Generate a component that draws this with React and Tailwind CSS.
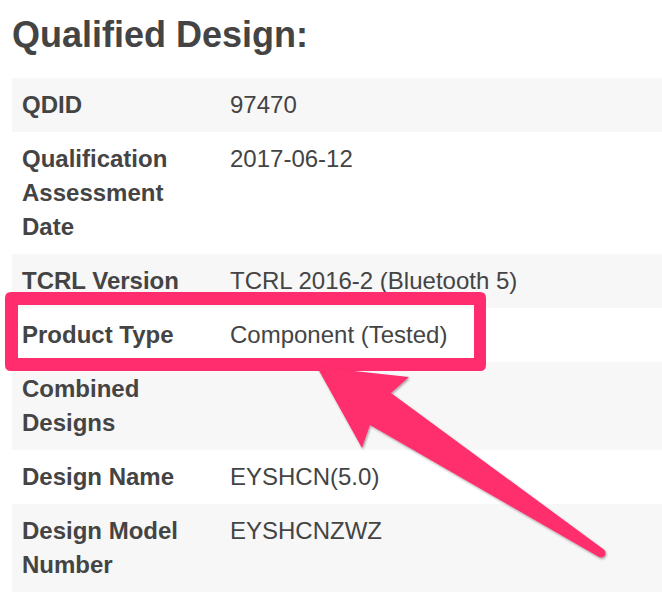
import React from "react";

const rows = [
  { label: "QDID", value: "97470" },
  { label: "Qualification Assessment Date", value: "2017-06-12" },
  { label: "TCRL Version", value: "TCRL 2016-2 (Bluetooth 5)" },
  { label: "Product Type", value: "Component (Tested)" },
  { label: "Combined Designs", value: "" },
  { label: "Design Name", value: "EYSHCN(5.0)" },
  { label: "Design Model Number", value: "EYSHCNZWZ" },
];

// the pink annotation drawn over the table
const Callout = () => (
  <svg
    className="absolute left-0 top-0 pointer-events-none"
    width="662"
    height="592"
    viewBox="0 0 662 592"
  >
    <defs>
      <filter id="shadow" x="-10%" y="-10%" width="120%" height="120%">
        <feDropShadow dx="1" dy="1.5" stdDeviation="1" floodColor="#000" floodOpacity="0.35" />
      </filter>
    </defs>
    <path
      fillRule="evenodd"
      fill="#ff2d6d"
      d="M11 292 H480 Q486 292 486 298 V365 Q486 371 480 371 H11 Q5 371 5 365 V298 Q5 292 11 292 Z M18 305 V358 H474 V305 Z"
    />
    <path
      fill="#ff2d6d"
      filter="url(#shadow)"
      d="M317 367 L409 377 L391 393 L603.5 549.2 A4.5 4.5 0 0 1 598.5 556.8 L370 425 L362 448 Z"
    />
  </svg>
);

export default function App() {
  return (
    <div
      className="relative w-[662px] h-[592px] overflow-hidden bg-white text-[#444444]"
      style={{ fontFamily: '"Liberation Sans", Arial, sans-serif' }}
    >
      <h1 className="ml-[12px] mt-[13px] mb-[22px] text-[36px] leading-[43px] font-bold">
        Qualified Design:
      </h1>
      <div className="ml-[12px] flex flex-col text-[24px] leading-[34px]">
        {rows.map((r, i) => (
          <div
            key={r.label}
            className={`flex ${i % 2 === 0 ? "bg-[#f7f7f7]" : "bg-white"}`}
          >
            <div className="w-[208px] shrink-0 p-[10px] font-bold">{r.label}</div>
            <div className="flex-1 p-[10px] min-h-[54px]">{r.value}</div>
          </div>
        ))}
      </div>
      <Callout />
    </div>
  );
}
